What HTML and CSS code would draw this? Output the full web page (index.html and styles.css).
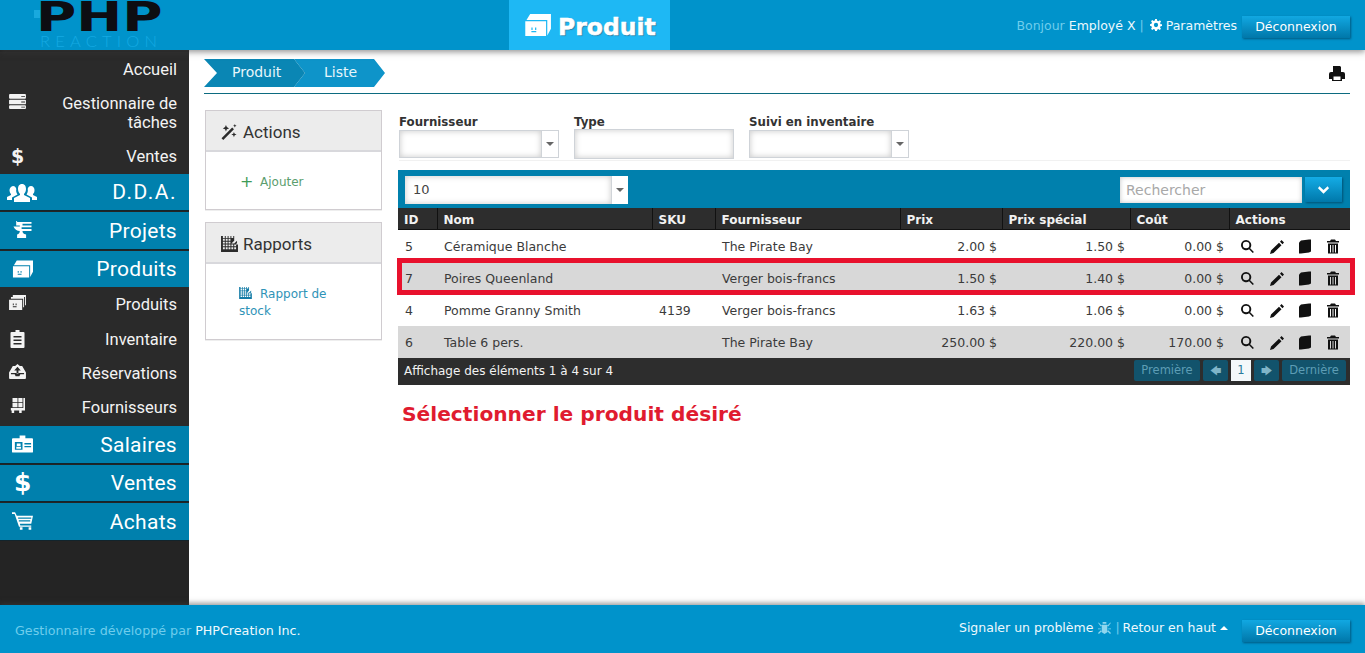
FILE: index.html
```html
<!DOCTYPE html>
<html lang="fr">
<head>
<meta charset="utf-8">
<title>Produit</title>
<link rel="stylesheet" href="styles.css">
</head>
<body>
<svg class="sprite" width="0" height="0" aria-hidden="true">
  <symbol id="i-server" viewBox="0 0 18 16"><path fill-rule="evenodd" d="M1 0h16a1 1 0 0 1 1 1v3a1 1 0 0 1-1 1H1a1 1 0 0 1-1-1V1a1 1 0 0 1 1-1zm12 2v1h4V2zM1 6h16a1 1 0 0 1 1 1v3a1 1 0 0 1-1 1H1a1 1 0 0 1-1-1V7a1 1 0 0 1 1-1zm12 2v1h4V8zM1 12h16a1 1 0 0 1 1 1v2a1 1 0 0 1-1 1H1a1 1 0 0 1-1-1v-2a1 1 0 0 1 1-1zm12 1.500v1h4v-1z"/></symbol>
  <symbol id="i-users" viewBox="0 0 30 20"><path d="M15 2c3 0 4 2.500 4 5 0 2-1 4-2 5v1l6 3v4H7v-4l6-3v-1c-1-1-2-3-2-5 0-2.500 1-5 4-5zM6 4c2 0 3 1.500 3.300 3-.5 2 .2 4 1.200 5.500L5 15.500V18H0v-3l4-2v-1c-1-1-1.500-2.500-1.500-4S4 4 6 4zm18 0c2 0 3.500 2 3.500 4s-.5 3-1.500 4v1l4 2v3h-5v-2.500l-5.500-3c1-1.500 1.700-3.500 1.200-5.500C20.900 5.500 22 4 24 4z"/></symbol>
  <symbol id="i-anvil" viewBox="0 0 20 20"><path d="M3 0h1v1h16v2H10v2h10v2H9v2h11v2H10c0 2 1 3 4 4v4H4v-4c2-1 3-2 3-4-3 0-6-2-7-5h7V5H3z"/></symbol>
  <symbol id="i-box" viewBox="0 0 22 18"><path d="M5 0h17v12l-3 5.500V5H2zM1 6h17v12H1zm5 5v2h1v-2zm3 0v2h1v-2zm-3 3v1h4v-1z" fill-rule="evenodd"/></symbol>
  <symbol id="i-boxes" viewBox="0 0 18 16"><path d="M4 0h14v11h-1V2H4zM2 2h14v11h-1V4H2zM0 5h14v11H0zm4 4v2h1V9zm3 0v2h1V9zm-3 3v1h4v-1z" fill-rule="evenodd"/></symbol>
  <symbol id="i-clip" viewBox="0 0 14 18"><path fill-rule="evenodd" d="M5 0h4v2h4a1 1 0 0 1 1 1v14a1 1 0 0 1-1 1H1a1 1 0 0 1-1-1V3a1 1 0 0 1 1-1h4zM3 6v1.500h8V6zm0 3.500V11h8V9.500zM3 13v1.500h8V13z"/></symbol>
  <symbol id="i-inbox" viewBox="0 0 18 16"><path fill-rule="evenodd" d="M4 2h2.500L9 0l2.500 2H14l4 7v6a1 1 0 0 1-1 1H1a1 1 0 0 1-1-1V9zM9 3 5.500 7H8v3h2V7h2.500zm-7 6.500V11h4l1 2h4l1-2h4V9.500z"/></symbol>
  <symbol id="i-dolly" viewBox="0 0 18 18"><path fill-rule="evenodd" d="M3 0h6v5H3zM10 0h5v5h-5zM3 6h6v5H3zM10 6h5v5h-5zM16 0h2v15H1v-3h15zM2 15h3v3H2zM11 15h3v3h-3z"/></symbol>
  <symbol id="i-card" viewBox="0 0 22 18"><path fill-rule="evenodd" d="M8 0h6v3h7a1 1 0 0 1 1 1v13a1 1 0 0 1-1 1H1a1 1 0 0 1-1-1V4a1 1 0 0 1 1-1h7zM3 7v8h8V7zm10 1v1.500h7V8zm0 3v1.500h7V11zm-8-2.500h4V11H5zM4.500 12h5v2h-5z"/></symbol>
  <symbol id="i-cart" viewBox="0 0 24 20"><path fill-rule="evenodd" d="M0 0h3.500l2 4H24l-2 9H9l.5 2H22v1.500H8L3 2H0zM7 6v1.500h15V6zm.8 3v1.500h13V9zM9 17h3v3H9zm10 0h3v3h-3z"/></symbol>
  <symbol id="i-wand" viewBox="0 0 18 18"><path d="m0 16 12-12 2 2L2 18zM5 1l1 2.500L8.500 5 6 6 5 8.500 4 6 1.500 5 4 3.500zM14 9l.8 2 2.200.8-2.200.8-.8 2.400-.8-2.400-2.200-.8 2.200-.8zM15 0l.6 1.400L17 2l-1.400.6L15 4l-.6-1.400L13 2l1.400-.6z"/></symbol>
  <symbol id="i-chart" viewBox="0 0 18 17"><path fill-rule="evenodd" d="M0 0h2v2h2V0h1v2h2V0h1v2h2V0h1v2h2V0h1v5L11 8H14l3-3v3h-1v1h2v8H0zm2 3v2h2V3zm3 0v2h2V3zm3 0v2h2V3zM2 6v2h2V6zm3 0v2h2V6zm3 0v2h2V6zM2 9v2h2V9zm3 0v2h2V9zm3 0v2h2V9zm3 0v2h2V9zm3 0v2h2V9zM2 12v2h2v-2zm3 0v2h2v-2zm3 0v2h2v-2zm3 0v2h2v-2zm3 0v2h2v-2z"/></symbol>
  <symbol id="i-search" viewBox="0 0 14 14"><path fill-rule="evenodd" d="M5.500 0a5.500 5.500 0 0 1 4.400 8.800l4 4-1.200 1.200-4-4A5.500 5.500 0 1 1 5.500 0zm0 2a3.500 3.500 0 1 0 0 7 3.500 3.500 0 0 0 0-7z"/></symbol>
  <symbol id="i-pencil" viewBox="0 0 14 14"><path d="M11.500 0 14 2.500l-1.500 1.800L10 1.800zM9 2.800l2.500 2.500-8 7.700L0 14l1-3.500z"/></symbol>
  <symbol id="i-book" viewBox="0 0 12 14"><path d="M2 1 10 0h2v12l-2 1-8 1H0V3z"/></symbol>
  <symbol id="i-trash" viewBox="0 0 12 14"><path fill-rule="evenodd" d="M4 0h4l1 1.500h3V3H0V1.500h3zM1 4h10v10H1zm2 1.500V13h1V5.500zm2.500 0V13h1V5.500zm2.500 0V13h1V5.500z"/></symbol>
  <symbol id="i-print" viewBox="0 0 16 15"><path fill-rule="evenodd" d="M4 0h7l1 1v5h2a2 2 0 0 1 2 2v5h-3v2H3v-2H0V8a2 2 0 0 1 2-2h2zM4.500 10.500V14h7v-3.500z"/></symbol>
  <symbol id="i-cog" viewBox="0 0 14 14"><path fill-rule="evenodd" d="M6 0h2l.4 2 1.400.6L11.500 1.500 12.900 3l-1.100 1.600.5 1.400 1.700.2v2l-1.700.3-.6 1.400 1.100 1.600-1.400 1.400-1.700-1.100-1.300.6L8 14H6l-.4-1.700-1.400-.5-1.600 1.100L1.200 11.500l1-1.700-.5-1.300L0 8V6l1.700-.4.600-1.400L1.200 2.600 2.600 1.200l1.700 1.100L5.600 1.700zM7 4.500a2.500 2.500 0 1 0 0 5 2.500 2.500 0 0 0 0-5z"/></symbol>
  <symbol id="i-bug" viewBox="0 0 14 14"><path d="M5 1h4v2H5zM4 4h6v8l-3 2-3-2zM0 2l1 0 3 3-1 1zM14 2h-1l-3 3 1 1zM0 8h3v1H0zM11 8h3v1h-3zM0 13l3-3 1 1-3 3zM14 13l-3-3-1 1 3 3z"/></symbol>
</svg>

<header class="topbar">
  <div class="logo">
    <span class="logo-dot"></span>
    <span class="logo-php">PHP</span>
    <span class="logo-sub">REACTION</span>
  </div>
  <div class="title-tab">
    <svg class="title-icon"><use href="#i-box"/></svg>
    <span>Produit</span>
  </div>
  <div class="user-area">
    <span class="dim">Bonjour</span>
    <span class="bright">Employé X</span>
    <span class="dim">|</span>
    <svg class="ico-cog"><use href="#i-cog"/></svg>
    <span class="bright">Paramètres</span>
    <button class="logout">Déconnexion</button>
  </div>
</header>

<div class="middle">
  <nav class="sidebar">
    <a class="nav sub h35">Accueil</a>
    <a class="nav sub h52"><svg class="nico nico-s"><use href="#i-server"/></svg><span>Gestionnaire de tâches</span></a>
    <a class="nav sub h35"><span class="nico-dollar">$</span><span>Ventes</span></a>
    <a class="nav main h-36"><svg class="nico nico-u"><use href="#i-users"/></svg><span class="spaced">D.D.A.</span></a>
    <a class="nav main"><svg class="nico nico-m"><use href="#i-anvil"/></svg><span>Projets</span></a>
    <a class="nav main h-36 flush"><svg class="nico nico-m"><use href="#i-box"/></svg><span>Produits</span></a>
    <a class="nav sub h35"><svg class="nico nico-s"><use href="#i-boxes"/></svg><span>Produits</span></a>
    <a class="nav sub h34"><svg class="nico nico-c"><use href="#i-clip"/></svg><span>Inventaire</span></a>
    <a class="nav sub h34"><svg class="nico nico-s"><use href="#i-inbox"/></svg><span>Réservations</span></a>
    <a class="nav sub h36"><svg class="nico nico-s"><use href="#i-dolly"/></svg><span>Fournisseurs</span></a>
    <a class="nav main"><svg class="nico nico-m"><use href="#i-card"/></svg><span>Salaires</span></a>
    <a class="nav main h-36"><span class="nico-dollar big">$</span><span>Ventes</span></a>
    <a class="nav main"><svg class="nico nico-m"><use href="#i-cart"/></svg><span>Achats</span></a>
  </nav>

  <main class="content">
    <div class="crumbs-row">
      <div class="crumbs">
        <a class="crumb first">Produit</a>
        <a class="crumb second">Liste</a>
      </div>
      <svg class="ico-print"><use href="#i-print"/></svg>
    </div>

    <div class="columns">
      <aside class="side-panels">
        <section class="panel">
          <h3 class="panel-head"><svg class="ph-ico"><use href="#i-wand"/></svg>Actions</h3>
          <div class="panel-body body-actions"><a class="add"><span class="plus">+</span>Ajouter</a></div>
        </section>
        <section class="panel">
          <h3 class="panel-head"><svg class="ph-ico"><use href="#i-chart"/></svg>Rapports</h3>
          <div class="panel-body body-reports"><a class="report"><svg class="rep-ico"><use href="#i-chart"/></svg>Rapport de stock</a></div>
        </section>
      </aside>

      <div class="list-area">
        <div class="filters">
          <div class="filter"><label>Fournisseur</label><div class="combo"><div class="combo-input"></div><div class="combo-btn"><i class="caret"></i></div></div></div>
          <div class="filter"><label>Type</label><div class="plain-input"></div></div>
          <div class="filter"><label>Suivi en inventaire</label><div class="combo"><div class="combo-input"></div><div class="combo-btn"><i class="caret"></i></div></div></div>
        </div>

        <div class="grid-wrap">
          <div class="toolbar">
            <div class="combo pager-size"><div class="combo-input">10</div><div class="combo-btn"><i class="caret"></i></div></div>
            <div class="search">Rechercher</div>
            <button class="search-btn"><svg viewBox="0 0 12 8" class="chev"><path d="M1.500 0 6 4 10.500 0 12 2 6 8 0 2z"/></svg></button>
          </div>
          <table class="grid">
            <colgroup><col class="c1"><col class="c2"><col class="c3"><col class="c4"><col class="c5"><col class="c6"><col class="c7"><col class="c8"></colgroup>
            <thead><tr><th>ID</th><th>Nom</th><th>SKU</th><th>Fournisseur</th><th>Prix</th><th>Prix spécial</th><th>Coût</th><th>Actions</th></tr></thead>
            <tbody>
              <tr class="r1"><td>5</td><td>Céramique Blanche</td><td></td><td>The Pirate Bay</td><td class="num">2.00 $</td><td class="num">1.50 $</td><td class="num">0.00 $</td><td class="acts"><svg class="a-s"><use href="#i-search"/></svg><svg class="a-p"><use href="#i-pencil"/></svg><svg class="a-b"><use href="#i-book"/></svg><svg class="a-t"><use href="#i-trash"/></svg></td></tr>
              <tr class="alt"><td>7</td><td>Poires Queenland</td><td></td><td>Verger bois-francs</td><td class="num">1.50 $</td><td class="num">1.40 $</td><td class="num">0.00 $</td><td class="acts"><svg class="a-s"><use href="#i-search"/></svg><svg class="a-p"><use href="#i-pencil"/></svg><svg class="a-b"><use href="#i-book"/></svg><svg class="a-t"><use href="#i-trash"/></svg></td></tr>
              <tr><td>4</td><td>Pomme Granny Smith</td><td>4139</td><td>Verger bois-francs</td><td class="num">1.63 $</td><td class="num">1.06 $</td><td class="num">0.00 $</td><td class="acts"><svg class="a-s"><use href="#i-search"/></svg><svg class="a-p"><use href="#i-pencil"/></svg><svg class="a-b"><use href="#i-book"/></svg><svg class="a-t"><use href="#i-trash"/></svg></td></tr>
              <tr class="alt"><td>6</td><td>Table 6 pers.</td><td></td><td>The Pirate Bay</td><td class="num">250.00 $</td><td class="num">220.00 $</td><td class="num">170.00 $</td><td class="acts"><svg class="a-s"><use href="#i-search"/></svg><svg class="a-p"><use href="#i-pencil"/></svg><svg class="a-b"><use href="#i-book"/></svg><svg class="a-t"><use href="#i-trash"/></svg></td></tr>
            </tbody>
          </table>
          <div class="grid-foot">
            <span class="count">Affichage des éléments 1 à 4 sur 4</span>
            <div class="pager">
              <a class="pg pg-first">Première</a>
              <a class="pg pg-arrow">🡄</a>
              <a class="pg-cur">1</a>
              <a class="pg pg-arrow">🡆</a>
              <a class="pg pg-last">Dernière</a>
            </div>
          </div>
          <div class="red-box"></div>
        </div>
        <p class="hint">Sélectionner le produit désiré</p>
      </div>
    </div>
  </main>
</div>

<footer class="footbar">
  <div class="foot-left"><span class="dim">Gestionnaire développé par</span> <span class="bright">PHPCreation Inc.</span></div>
  <div class="foot-right">
    <span class="bright">Signaler un problème</span>
    <svg class="ico-bug"><use href="#i-bug"/></svg>
    <span class="dim sep">|</span>
    <span class="bright">Retour en haut</span>
    <i class="caret-up"></i>
    <button class="logout">Déconnexion</button>
  </div>
</footer>
</body>
</html>
```
FILE: styles.css
```css
* { box-sizing: border-box; }
html, body { margin: 0; height: 100%; }
body {
  display: flex;
  flex-direction: column;
  height: 100vh;
  overflow: hidden;
  background: #fff;
  font-family: "DejaVu Sans", Verdana, sans-serif;
  font-size: 12px;
  color: #333;
}
.sprite { position: absolute; }
svg { fill: currentColor; display: block; }

/* header */
.topbar {
  flex: 0 0 50px;
  display: flex;
  align-items: flex-start;
  background: #0093cb;
  box-shadow: 0 2px 6px rgba(60, 60, 60, .55);
  position: relative;
  z-index: 2;
  color: #fff;
}
.logo { position: relative; width: 509px; height: 50px; }
.logo-dot { position: absolute; left: 34px; top: 10px; width: 6px; height: 8px; background: #19a9de; }
.logo-php {
  position: absolute;
  left: 36px;
  top: 2px;
  font-family: "DejaVu Sans", sans-serif;
  font-weight: 700;
  font-size: 41px;
  line-height: 30px;
  color: #0d0d12;
  transform-origin: 0 50%;
  transform: scaleX(1.34);
}
.logo-sub {
  position: absolute;
  left: 40px;
  top: 34px;
  font-family: "Lato", sans-serif;
  font-weight: 300;
  font-size: 16.500px;
  line-height: 15px;
  letter-spacing: 5.200px;
  color: #15a9e2;
}
.title-tab {
  width: 161px;
  height: 50px;
  background: #1eb8f4;
  display: flex;
  align-items: center;
  gap: 7px;
  padding: 3px 0 0 15px;
  font-weight: 700;
  font-size: 23.500px;
  color: #fff;
  -webkit-text-stroke: .5px #fff;
  text-shadow: 1px 1px 1px #2a7aa0;
}
.title-icon { width: 27px; height: 22px; color: #fff; margin-top: -4px; }
.user-area {
  margin-left: auto;
  display: flex;
  align-items: center;
  gap: 4px;
  padding: 0 15px 0 0;
  font-size: 12.500px;
  height: 50px;
}
.user-area .logout { margin-top: 4px; line-height: 20px; }
.dim { color: #6fcdec; }
.bright { color: #eef9fd; }
.ico-cog { width: 12px; height: 12px; color: #fff; margin-left: 2px; }
.logout {
  margin-left: 1px;
  width: 108px;
  height: 22px;
  border: 0;
  padding: 0 0 1px;
  background: linear-gradient(#11a8e2, #0077a9);
  box-shadow: 1px 1px 2px rgba(0, 50, 80, .6);
  font: 12.500px "DejaVu Sans", sans-serif;
  color: #fff;
}

.middle { flex: 1; display: flex; min-height: 0; }

/* sidebar */
.sidebar {
  width: 189px;
  flex: 0 0 189px;
  background: #242424;
  padding-top: 2px;
  color: #fff;
  font-family: "Roboto", sans-serif;
}
.nav {
  display: flex;
  justify-content: flex-end;
  align-items: center;
  text-align: right;
  position: relative;
  padding: 0 12px 0 40px;
}
.sub { background: #2a2a2a; font-size: 16.500px; line-height: 19px; color: #f3f3f3; }
.h35 { height: 35px; }
.h52 { height: 52px; padding-left: 50px; }
.h34 { height: 34px; }
.h36 { height: 36px; padding-bottom: 2px; }
.main {
  height: 37px;
  margin-bottom: 2px;
  background: #0080ad;
  font-size: 21px;
  letter-spacing: .3px;
  box-shadow: 0 1px 0 #12242c;
}
.main.h-36 { height: 36px; }
.main.flush { margin-bottom: 0; }
.spaced { letter-spacing: 1.500px; }
.nico { position: absolute; }
.nico-s { left: 9px; top: 8px; width: 17px; height: 15px; }
.h52 .nico-s { top: 7px; }
.nico-c { left: 10px; top: 8px; width: 15px; height: 18px; }
.nico-u { left: 7px; top: 8px; width: 30px; height: 20px; }
.nico-m { left: 12px; top: 9px; width: 21px; height: 18px; }
.nico-dollar {
  position: absolute;
  left: 11px;
  top: 4px;
  font: 700 19px/26px "DejaVu Sans", sans-serif;
}
.nico-dollar.big { left: 14px; top: 3px; font-size: 25px; line-height: 30px; }

/* content */
.content { flex: 1; min-width: 0; padding: 9px 15px 0 15px; }
.crumbs-row {
  display: flex;
  justify-content: space-between;
  height: 35px;
  border-bottom: 1px solid #0c6b80;
  align-items: flex-start;
}
.crumbs { display: flex; height: 28px; }
.crumb {
  height: 28px;
  line-height: 27px;
  color: #e8f6fb;
  font-size: 14px;
}
.first {
  width: 101px;
  padding-left: 28px;
  background: #0a86b4;
  clip-path: polygon(0 0, 90px 0, 101px 14px, 90px 100%, 0 100%, 13px 14px);
  position: relative;
  z-index: 1;
}
.second {
  width: 91px;
  margin-left: -11px;
  padding-left: 30px;
  background: #0e94c9;
  clip-path: polygon(0 0, 80px 0, 91px 14px, 80px 100%, 0 100%, 11px 14px);
}
.ico-print { width: 16px; height: 15px; margin: 7px 5px 0 0; color: #111; }

.columns { display: flex; }
.side-panels { width: 177px; margin: 16px 0 0 1px; flex: 0 0 177px; }
.panel {
  border: 1px solid #d0ccd0;
  margin-bottom: 12px;
  box-shadow: 0 1px 0 #eee;
}
.panel-head {
  margin: 0;
  height: 41px;
  background: #ececec;
  border-bottom: 2px solid #d8d8dc;
  display: flex;
  align-items: center;
  padding: 2px 0 0 15px;
  font-family: "Roboto", sans-serif;
  font-weight: 400;
  font-size: 17px;
  color: #333;
  gap: 5px;
}
.ph-ico { width: 17px; height: 16px; color: #2b2b2b; }
.panel-body { background: #fff; font-size: 12px; }
.body-actions { height: 57px; padding: 23px 0 0 34px; }
.body-reports { height: 75px; padding: 22px 20px 0 33px; line-height: 17px; }
.add { color: #5b9e6e; display: flex; align-items: center; }
.plus { font-size: 16px; line-height: 14px; color: #3f9c58; margin-right: 9px; width: 11px; }
.report { color: #2f93b7; }
.rep-ico { display: inline-block; width: 13px; height: 12px; margin-right: 8px; color: #127ba6; vertical-align: -1px; }

.list-area { flex: 1; margin-left: 16px; min-width: 0; }
.filters {
  display: flex;
  gap: 15px;
  margin: 21px 0 0 1px;
  height: 46px;
  border-bottom: 1px solid #f1f1f1;
  width: 951px;
}
.filter { width: 160px; }
.filter label { display: block; font-weight: 700; font-size: 11.800px; line-height: 14px; color: #333; }
.combo { display: flex; height: 28px; border: 1px solid #cfd3d8; background: #fff; }
.filter .combo { margin-top: 1px; }
.combo-input { flex: 1; box-shadow: inset 0 0 6px #c8c8c8; padding-left: 8px; font-size: 13px; line-height: 28px; color: #444; }
.combo-btn { width: 17px; border-left: 1px solid #d0d4d8; display: flex; align-items: center; justify-content: center; background: #fff; }
.caret { border: 4px solid transparent; border-top: 4px solid #666; border-bottom: 0; display: block; }
.plain-input { height: 30px; border: 1px solid #cfd3d8; box-shadow: inset 0 0 6px #c8c8c8; background: #fff; }

.grid-wrap { position: relative; width: 952px; margin-top: 9px; }
.toolbar {
  height: 38px;
  background: #0080ad;
  display: flex;
  align-items: flex-start;
  padding: 6px 8px 0 7px;
}
.pager-size { width: 223px; height: 28px; border: 0; }
.search {
  margin: 1px 0 0 auto;
  width: 182px;
  height: 26px;
  background: #fff;
  box-shadow: inset 0 0 5px #c4c4c4;
  padding-left: 6px;
  font-size: 14px;
  line-height: 26px;
  color: #a8a8a8;
}
.search-btn {
  margin: 1px 0 0 3px;
  width: 37px;
  height: 25px;
  border: 0;
  padding: 0;
  background: linear-gradient(#14ace6, #0078aa);
  box-shadow: 1px 1px 2px rgba(0, 50, 80, .6);
  display: flex;
  align-items: center;
  justify-content: center;
}
.chev { width: 11px; height: 8px; fill: #fff; }

.grid { width: 952px; border-collapse: collapse; table-layout: fixed; }
.c1 { width: 39px; } .c2 { width: 215px; } .c3 { width: 63px; } .c4 { width: 185px; }
.c5 { width: 102px; } .c6 { width: 128px; } .c7 { width: 99px; } .c8 { width: 121px; }
.grid th {
  height: 21px;
  padding: 4px 0 0 6px;
  background: #2d2d2d;
  border-left: 1px solid #111;
  border-bottom: 1px solid #111;
  color: #f2f2f2;
  text-align: left;
  font-size: 12px;
  line-height: 16px;
}
.grid th:first-child { border-left: 0; }
.grid td {
  height: 32px;
  padding: 0 0 0 7px;
  font-size: 12.500px;
  color: #3b3b3b;
  white-space: nowrap;
}
.grid .r1 td { height: 33px; padding-top: 1px; }
.grid .alt td { background: #d8d8d8; }
.grid td.num { text-align: right; padding-right: 5px; padding-left: 0; }
.acts { position: relative; }
.grid td.acts { padding-left: 12px; color: #111; }
.acts svg { display: inline-block; vertical-align: middle; }
.a-s { width: 13px; height: 13px; margin-right: 16px; }
.a-p { width: 14px; height: 14px; margin-right: 15px; }
.a-b { width: 12px; height: 15px; margin-right: 16px; }
.a-t { width: 12px; height: 15px; }

.grid-foot {
  height: 27px;
  background: #2d2d2d;
  display: flex;
  justify-content: space-between;
  align-items: center;
  padding: 0 4px 2px 6px;
  color: #f2f2f2;
  font-size: 12px;
}
.pager { display: flex; gap: 3px; align-items: center; }
.pg {
  height: 21px;
  background: #12536c;
  color: #5d9db5;
  font-size: 11.500px;
  line-height: 21px;
  text-align: center;
  border-radius: 2px;
}
.pg-first { width: 66px; margin-right: 0; }
.pg-arrow { width: 25px; font-size: 11px; color: #7fb4c8; }
.pg-cur { width: 20px; height: 21px; background: #f4f8fa; color: #2a7a9a; text-align: center; line-height: 21px; font-size: 11.500px; }
.pg-last { width: 64px; }
.red-box {
  position: absolute;
  left: -1px;
  top: 88px;
  width: 958px;
  height: 37px;
  border: 5px solid #e8112d;
  pointer-events: none;
}
.hint {
  margin: 16px 0 0 4px;
  font-weight: 700;
  font-size: 20.200px;
  line-height: 26px;
  color: #e01b2f;
}

/* footer */
.footbar {
  flex: 0 0 48px;
  background: #0093cb;
  box-shadow: 0 -2px 5px rgba(60, 60, 60, .5);
  position: relative;
  display: flex;
  justify-content: space-between;
  align-items: flex-start;
  padding: 8px 15px 0 15px;
  font-size: 12.500px;
}
.foot-left { padding-top: 10px; font-size: 12.700px; }
.foot-right { display: flex; align-items: center; gap: 4px; }
.foot-right .logout { margin-top: 7px; }
.sep { margin: 0 -1px; }
.ico-bug { width: 13px; height: 13px; color: #8fd6ee; margin: 0 1px; }
.caret-up { border: 4px solid transparent; border-bottom: 4px solid #fff; border-top: 0; display: block; margin: 1px 9px 0 0; }
```
